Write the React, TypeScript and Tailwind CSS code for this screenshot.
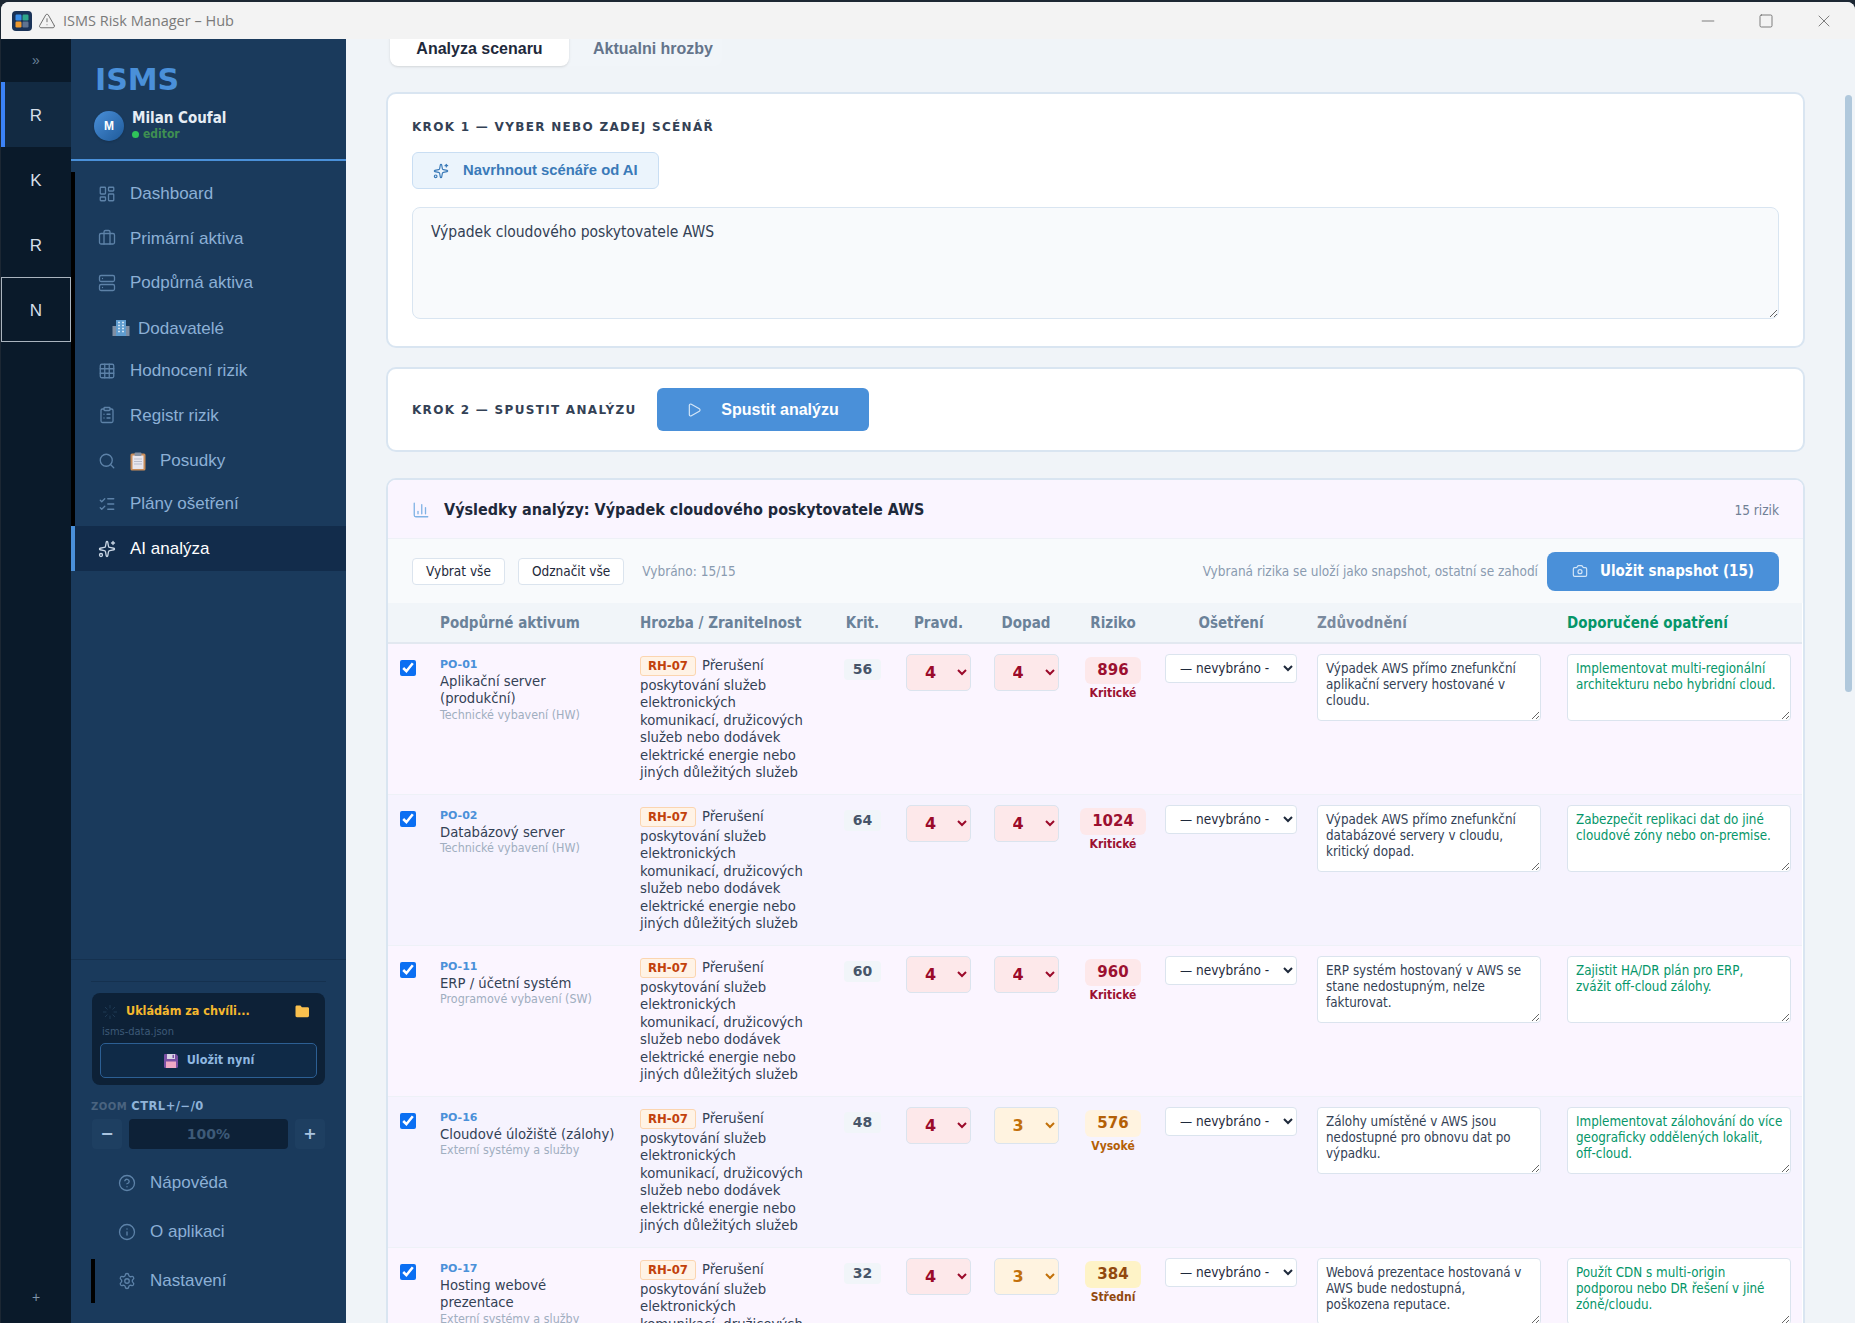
import {
  Briefcase,
  Camera,
  ChartColumn,
  CircleHelp,
  ClipboardList,
  Grid3x3,
  Info,
  LayoutDashboard,
  ListChecks,
  Loader,
  Minus,
  Play,
  Search,
  Server,
  Settings,
  Sparkles,
  Square,
  TriangleAlert,
  X,
} from "lucide-react";

const THREAT =
  "Přerušení poskytování služeb elektronických komunikací, družicových služeb nebo dodávek elektrické energie nebo jiných důležitých služeb";

const LEVELS: Record<number, string> = {
  4: "bg-[#fde8ea] text-[#9b0a2a]",
  3: "bg-[#fff3e0] text-[#c2700a]",
};

const RISKS: Record<string, { box: string; label: string }> = {
  "Kritické": { box: "bg-[#fde8ea] text-[#9b1030]", label: "text-[#9b1030]" },
  "Vysoké": { box: "bg-[#fff3e0] text-[#b45f06]", label: "text-[#b45f06]" },
  "Střední": { box: "bg-[#fef3c7] text-[#92480e]", label: "text-[#92480e]" },
};

const rows = [
  {
    id: "PO-01",
    name: "Aplikační server (produkční)",
    cat: "Technické vybavení (HW)",
    krit: 56,
    p: 4,
    d: 4,
    risk: 896,
    level: "Kritické",
    why: "Výpadek AWS přímo znefunkční aplikační servery hostované v cloudu.",
    fix: "Implementovat multi-regionální architekturu nebo hybridní cloud.",
  },
  {
    id: "PO-02",
    name: "Databázový server",
    cat: "Technické vybavení (HW)",
    krit: 64,
    p: 4,
    d: 4,
    risk: 1024,
    level: "Kritické",
    why: "Výpadek AWS přímo znefunkční databázové servery v cloudu, kritický dopad.",
    fix: "Zabezpečit replikaci dat do jiné cloudové zóny nebo on-premise.",
  },
  {
    id: "PO-11",
    name: "ERP / účetní systém",
    cat: "Programové vybavení (SW)",
    krit: 60,
    p: 4,
    d: 4,
    risk: 960,
    level: "Kritické",
    why: "ERP systém hostovaný v AWS se stane nedostupným, nelze fakturovat.",
    fix: "Zajistit HA/DR plán pro ERP,\nzvážit off-cloud zálohy.",
  },
  {
    id: "PO-16",
    name: "Cloudové úložiště (zálohy)",
    cat: "Externí systémy a služby",
    krit: 48,
    p: 4,
    d: 3,
    risk: 576,
    level: "Vysoké",
    why: "Zálohy umístěné v AWS jsou nedostupné pro obnovu dat po výpadku.",
    fix: "Implementovat zálohování do více geograficky oddělených lokalit,\noff-cloud.",
  },
  {
    id: "PO-17",
    name: "Hosting webové prezentace",
    cat: "Externí systémy a služby",
    krit: 32,
    p: 4,
    d: 3,
    risk: 384,
    level: "Střední",
    why: "Webová prezentace hostovaná v AWS bude nedostupná,\npoškozena reputace.",
    fix: "Použít CDN s multi-origin\npodporou nebo DR řešení v jiné\nzóně/cloudu.",
  },
];

function AppLogo() {
  return (
    <svg width="20" height="20" viewBox="0 0 20 20">
      <rect width="20" height="20" rx="4" fill="#1a3358" />
      <rect x="3.5" y="3.5" width="6" height="6" rx="1.2" fill="#3b8ee8" />
      <rect x="10.5" y="3.5" width="6" height="6" rx="1.2" fill="#2fa68a" />
      <rect x="3.5" y="10.5" width="6" height="6" rx="1.2" fill="#ef9a2e" />
      <rect x="10.5" y="10.5" width="6" height="6" rx="1.2" fill="#5f7390" />
    </svg>
  );
}

function BuildingIcon() {
  return (
    <svg width="18" height="18" viewBox="0 0 18 18">
      <rect x="0.5" y="7" width="5" height="10" fill="#7f8ea3" />
      <rect x="12.5" y="7" width="5" height="10" fill="#7f8ea3" />
      <rect x="4" y="1" width="10" height="16" fill="#5f9ccf" />
      <path d="M6 3.5h2M10 3.5h2M6 6.5h2M10 6.5h2M6 9.5h2M10 9.5h2M6 12.5h2M10 12.5h2" stroke="#cfe3f5" strokeWidth="1.4" />
    </svg>
  );
}

function ClipboardEmoji() {
  return (
    <svg width="16" height="19" viewBox="0 0 16 19">
      <rect x="0.5" y="1.5" width="15" height="17" rx="1.5" fill="#c98d5a" />
      <rect x="2.5" y="3.5" width="11" height="13.5" fill="#e8e6ee" />
      <rect x="4.5" y="0.5" width="7" height="3.5" rx="1" fill="#8792a3" />
      <path d="M4 7h8M4 9.5h8M4 12h8" stroke="#b9bccb" strokeWidth="1" />
    </svg>
  );
}

function FloppyIcon() {
  return (
    <svg width="16" height="16" viewBox="0 0 16 16">
      <path d="M1 2.2C1 1.5 1.5 1 2.2 1H13l2 2v10.800c0 .7-.5 1.200-1.200 1.200H2.200C1.500 15 1 14.500 1 13.800z" fill="#7a4fa3" />
      <rect x="4" y="1" width="8" height="5" fill="#d9d4e4" />
      <rect x="9.500" y="1.800" width="1.500" height="3.200" fill="#7a4fa3" />
      <rect x="3" y="8.500" width="10" height="6.500" fill="#f0a8c4" />
    </svg>
  );
}

function FolderIcon() {
  return (
    <svg width="15" height="13" viewBox="0 0 15 13">
      <path d="M0.500 2C0.500 1.200 1.100.6 1.900.6h3.500l1.500 1.600h5.800c.8 0 1.300.6 1.300 1.300v7.300c0 .8-.6 1.400-1.400 1.400H1.900c-.8 0-1.400-.6-1.400-1.400z" fill="#f9c04e" />
    </svg>
  );
}

function NavItem({
  label,
  Icon,
  active,
  extra,
}: {
  label: string;
  Icon: typeof Search;
  active?: boolean;
  extra?: React.ReactNode;
}) {
  return (
    <div
      className={
        active
          ? "flex h-[45px] items-center gap-[14px] border-l-4 border-[#4a90d9] bg-[#122c4b] pl-[23px] text-white"
          : extra
            ? "flex h-[44.250px] items-center gap-[14px] border-l-4 border-black pl-[23px] pt-[3px] text-[#8cb0d6]"
            : "flex h-[44.250px] items-center gap-[14px] border-l-4 border-black pl-[23px] text-[#8cb0d6]"
      }
    >
      <Icon size={18} strokeWidth={1.75} className={active ? "text-[#c9d6e4]" : "text-[#5d82a8]"} />
      {extra}
      <span className="text-[17px]">{label}</span>
    </div>
  );
}

function RailItem({ label, active, focus }: { label: string; active?: boolean; focus?: boolean }) {
  let cls = "flex h-[65px] items-center justify-center pt-[2px] text-[17px] text-[#d5dfe9]";
  if (active) cls += " border-l-[4px] border-[#3b82f6] bg-[#122a42] pr-1";
  if (focus) cls += " border border-[#aab4be]";
  return <div className={cls}>{label}</div>;
}

function FootLink({ label, Icon, bar }: { label: string; Icon: typeof Search; bar?: boolean }) {
  return (
    <div
      className={
        bar
          ? "ml-5 mt-[3px] flex h-[44px] items-center gap-[14px] border-l-4 border-black pl-[23px] text-[#8cb0d6]"
          : "ml-5 flex h-[49px] items-center gap-[14px] border-l-4 border-transparent pl-[23px] text-[#8cb0d6]"
      }
    >
      <Icon size={18} strokeWidth={1.75} className="text-[#5d82a8]" />
      <span className="text-[17px]">{label}</span>
    </div>
  );
}

function Sidebar() {
  return (
    <aside className="flex w-[275px] shrink-0 flex-col bg-[#1a3a5c] font-['Liberation_Sans',sans-serif]">
      <div className="h-[122px] border-b-2 border-[#4a90d9] pl-[24px] pt-[23px]">
        <div className="font-['DejaVu_Sans',sans-serif] text-[30px] font-bold leading-[36px] text-[#4a90d9]">ISMS</div>
        <div className="-ml-[1px] mt-[12px] flex items-center gap-2">
          <div className="flex h-[30px] w-[30px] items-center justify-center rounded-full bg-gradient-to-br from-[#4a90d9] to-[#1e5a9a] text-[12px] font-bold text-white shadow">
            M
          </div>
          <div className="font-['DejaVu_Sans_Condensed',sans-serif]">
            <div className="text-[15px] font-bold leading-[17px] text-[#e6edf5]">Milan Coufal</div>
            <div className="flex items-center gap-1 text-[12px] font-bold leading-[15px] text-[#3f8f52]">
              <span className="h-[7px] w-[7px] rounded-full bg-[#2fc45a]" />
              editor
            </div>
          </div>
        </div>
      </div>
      <nav className="flex flex-1 flex-col pt-[11px]">
        <NavItem label="Dashboard" Icon={LayoutDashboard} />
        <NavItem label="Primární aktiva" Icon={Briefcase} />
        <NavItem label="Podpůrná aktiva" Icon={Server} />
        <div className="flex h-[44.250px] items-center gap-2 border-l-4 border-black pl-[37px] pt-[3px] text-[#8cb0d6]">
          <BuildingIcon />
          <span className="text-[17px]">Dodavatelé</span>
        </div>
        <NavItem label="Hodnocení rizik" Icon={Grid3x3} />
        <NavItem label="Registr rizik" Icon={ClipboardList} />
        <NavItem label="Posudky" Icon={Search} extra={<ClipboardEmoji />} />
        <NavItem label="Plány ošetření" Icon={ListChecks} />
        <NavItem label="AI analýza" Icon={Sparkles} active />
      </nav>
      <div className="border-t border-[#15314f] px-5 pt-[21px]">
        <div className="border-t border-[#15314f] pt-[11px]">
          <div className="mx-px rounded-lg bg-[#0d2137] px-2 pb-[7px] pt-[9px]">
            <div className="flex items-center font-['DejaVu_Sans_Condensed',sans-serif]">
              <Loader size={16} strokeWidth={1.5} className="ml-[2px] text-[#1f3a55]" />
              <span className="ml-2 flex-1 text-[12.500px] font-bold text-[#f5b82e]">Ukládám za chvíli...</span>
              <span className="mr-[7px]">
                <FolderIcon />
              </span>
            </div>
            <div className="ml-[2px] mt-[4px] font-['DejaVu_Sans_Condensed',sans-serif] text-[11px] leading-[14px] text-[#3d5a78]">
              isms-data.json
            </div>
            <div className="mt-[4px] flex h-[35px] items-center justify-center gap-2 rounded-[5px] border border-[#2c5f94] bg-[#0f2a47] font-['DejaVu_Sans_Condensed',sans-serif] text-[12.500px] font-bold text-[#8fb8e0]">
              <FloppyIcon />
              Uložit nyní
            </div>
          </div>
        </div>
        <div className="mt-[15px] font-['DejaVu_Sans',sans-serif] text-[10px] font-bold leading-[13px] tracking-[0.5px] text-[#4a6480]">
          ZOOM <span className="text-[11.500px] text-[#8fb3d9]">CTRL+/−/0</span>
        </div>
        <div className="mx-px mt-[6px] flex h-[30px] gap-[7px] font-['DejaVu_Sans',sans-serif] font-bold">
          <div className="flex w-[30px] items-center justify-center rounded bg-[#1e3f61] text-[#a9c4e0]">−</div>
          <div className="flex flex-1 items-center justify-center rounded bg-[#0d2137] text-[14px] text-[#3d5a78]">100%</div>
          <div className="flex w-[30px] items-center justify-center rounded bg-[#1e3f61] text-[#a9c4e0]">+</div>
        </div>
      </div>
      <div className="mb-[20px] mt-[9px]">
        <FootLink label="Nápověda" Icon={CircleHelp} />
        <FootLink label="O aplikaci" Icon={Info} />
        <FootLink label="Nastavení" Icon={Settings} bar />
      </div>
    </aside>
  );
}

function ThreatBadge() {
  return (
    <span className="mr-[6px] inline-block rounded-[3px] border border-[#fbd5b0] bg-[#fff3e6] px-[7px] font-['DejaVu_Sans_Condensed',sans-serif] text-[13px] font-bold leading-[18px] text-[#c2410c]">
      RH-07
    </span>
  );
}

function ScoreSelect({ value }: { value: number }) {
  return (
    <select
      defaultValue={value}
      className={`h-[37px] w-[65px] rounded-[5px] border border-[#dbe4ee] pl-[14px] font-['DejaVu_Sans',sans-serif] text-[16px] font-bold ${LEVELS[value]}`}
    >
      <option value={4}>4</option>
      <option value={3}>3</option>
    </select>
  );
}

function Row({ row, odd }: { row: (typeof rows)[number]; odd: boolean }) {
  const risk = RISKS[row.level];
  return (
    <tr className={odd ? "border-b border-[#eef1f7] bg-[#fbf5ff]" : "border-b border-[#eef1f7] bg-[#f6f3fe]"}>
      <td className="pl-3 pt-[16px] align-top">
        <input type="checkbox" defaultChecked className="block h-4 w-4 accent-[#0b6ff2]" />
      </td>
      <td className="px-3 pt-[13px] align-top">
        <div className="font-['DejaVu_Sans',sans-serif] text-[11px] font-bold leading-[15px] text-[#4a90d9]">{row.id}</div>
        <div className="text-[14.700px] leading-[17.500px] text-[#334155]">{row.name}</div>
        <div className="text-[12.400px] leading-[16px] text-[#a0aec0]">{row.cat}</div>
      </td>
      <td className="pb-[13px] pl-3 pr-[28px] pt-[12px] align-top text-[14.700px] leading-[17.500px] text-[#334155]">
        <ThreatBadge />
        {THREAT}
      </td>
      <td className="pt-[13px] text-center align-top">
        <span className="inline-block h-[21px] w-[37px] rounded bg-[#f1f5f9] font-['DejaVu_Sans',sans-serif] text-[14px] font-bold leading-[21px] text-[#475569]">
          {row.krit}
        </span>
      </td>
      <td className="pt-[10px] text-center align-top">
        <ScoreSelect value={row.p} />
      </td>
      <td className="pt-[10px] text-center align-top">
        <ScoreSelect value={row.d} />
      </td>
      <td className="pt-[13px] text-center align-top">
        <span className={`inline-block h-[27px] rounded-md px-3 font-['DejaVu_Sans',sans-serif] text-[15px] font-bold leading-[27px] ${risk.box}`}>
          {row.risk}
        </span>
        <div className={`mt-[2px] font-['DejaVu_Sans_Condensed',sans-serif] text-[12px] font-bold leading-[14px] ${risk.label}`}>
          {row.level}
        </div>
      </td>
      <td className="pt-[10px] text-center align-top">
        <select className="h-[29px] w-[132px] rounded-[4px] border border-[#dbe4ee] bg-white pl-[10px] pr-0 text-[13.500px] text-[#1e293b]">
          <option>— nevybráno -</option>
        </select>
      </td>
      <td className="px-3 pt-[10px] align-top">
        <textarea
          readOnly
          defaultValue={row.why}
          className="block h-[67px] w-[224px] rounded-[4px] border border-[#dbe4ee] bg-white py-[6px] pl-2 pr-[2px] text-[13.300px] leading-[16.300px] text-[#334155]"
        />
      </td>
      <td className="px-3 pt-[10px] align-top">
        <textarea
          readOnly
          defaultValue={row.fix}
          className="block h-[67px] w-[224px] rounded-[4px] border border-[#dbe4ee] bg-white py-[6px] pl-2 pr-[2px] text-[13.300px] leading-[16.300px] text-[#059669]"
        />
      </td>
    </tr>
  );
}

const HEAD_CENTER = "pb-[7px] pt-[9px] text-center";

function Results() {
  return (
    <section className="overflow-hidden rounded-t-[10px] border-2 border-[#d9e5f1] bg-white">
      <div className="flex h-[59px] items-center justify-between border-b border-[#eef1f7] bg-[#faf5ff] pl-6 pr-6 pt-[2px]">
        <div className="flex items-center gap-[14px] font-['DejaVu_Sans_Condensed',sans-serif] text-[16px] font-bold text-[#1e293b]">
          <ChartColumn size={18} strokeWidth={1.75} className="text-[#7fb2e5]" />
          Výsledky analýzy: Výpadek cloudového poskytovatele AWS
        </div>
        <span className="text-[13.500px] text-[#718096]">15 rizik</span>
      </div>
      <div className="flex h-[64px] items-center justify-between bg-[#f8fafc] px-6">
        <div className="flex items-center gap-[13px]">
          <button className="h-[27px] rounded-[4px] border border-[#dbe4ee] bg-white px-[13px] text-[13.500px] text-[#1e293b]">Vybrat vše</button>
          <button className="h-[27px] rounded-[4px] border border-[#dbe4ee] bg-white px-[13px] text-[13.500px] text-[#1e293b]">Odznačit vše</button>
          <span className="ml-[5px] text-[13.500px] text-[#8a9bb0]">Vybráno: 15/15</span>
        </div>
        <div className="flex items-center gap-[9px]">
          <span className="text-[13.500px] text-[#8a9bb0]">Vybraná rizika se uloží jako snapshot, ostatní se zahodí</span>
          <button className="flex h-[39px] w-[232px] items-center justify-center gap-3 rounded-lg bg-[#4a90d9] text-[15px] font-bold text-white">
            <Camera size={16} strokeWidth={1.75} className="text-[#d4e6f8]" />
            Uložit snapshot (15)
          </button>
        </div>
      </div>
      <table className="w-[1414px] table-fixed border-collapse">
        <colgroup>
          <col className="w-[40px]" />
          <col className="w-[200px]" />
          <col className="w-[203px]" />
          <col className="w-[63px]" />
          <col className="w-[89px]" />
          <col className="w-[86px]" />
          <col className="w-[88px]" />
          <col className="w-[148px]" />
          <col className="w-[250px]" />
          <col className="w-[247px]" />
        </colgroup>
        <thead>
          <tr className="border-b-2 border-[#e2e8f0] bg-[#f1f5f9] text-[15px] font-bold text-[#6b8299]">
            <th />
            <th className="px-3 pb-[7px] pt-[9px] text-left">Podpůrné aktivum</th>
            <th className="px-3 pb-[7px] pt-[9px] text-left">Hrozba / Zranitelnost</th>
            <th className={HEAD_CENTER}>Krit.</th>
            <th className={HEAD_CENTER}>Pravd.</th>
            <th className={HEAD_CENTER}>Dopad</th>
            <th className={HEAD_CENTER}>Riziko</th>
            <th className={HEAD_CENTER}>Ošetření</th>
            <th className="px-3 pb-[7px] pt-[9px] text-left text-[#7a8a9e]">Zdůvodnění</th>
            <th className="px-3 pb-[7px] pt-[9px] text-left text-[#059669]">Doporučené opatření</th>
          </tr>
        </thead>
        <tbody>
          {rows.map((row, i) => (
            <Row key={row.id} row={row} odd={i % 2 === 0} />
          ))}
        </tbody>
      </table>
    </section>
  );
}

export default function App() {
  return (
    <div className="h-[1323px] w-[1855px] overflow-hidden bg-[#1c2733] pl-px pt-[2px]">
      <div className="flex h-full flex-col overflow-hidden rounded-t-lg bg-[#f0f4f8] font-['DejaVu_Sans_Condensed',sans-serif]">
        {/* Title bar */}
        <header className="flex h-[37px] shrink-0 items-center bg-[#f3f3f3] pl-[11px] font-['Open_Sans',sans-serif] text-[14.500px] text-[#7a7a7a]">
          <AppLogo />
          <TriangleAlert size={18} strokeWidth={1.25} className="ml-[6px] text-[#666]" />
          <span className="ml-[7px]">ISMS Risk Manager – Hub</span>
          <div className="ml-auto flex items-center gap-[40px] pr-[21px] text-[#666]">
            <Minus size={20} strokeWidth={1} />
            <Square size={16} strokeWidth={1.25} />
            <X size={20} strokeWidth={1} />
          </div>
        </header>

        <div className="flex min-h-0 flex-1">
          {/* App rail */}
          <div className="flex w-[70px] shrink-0 flex-col bg-[#0a1a2a] font-['Liberation_Sans',sans-serif]">
            <div className="flex h-[43px] items-center justify-center text-[14px] text-[#6b8299]">»</div>
            <RailItem label="R" active />
            <RailItem label="K" />
            <RailItem label="R" />
            <RailItem label="N" focus />
            <div className="mb-[15px] mt-auto text-center text-[14px] text-[#7f95ab]">+</div>
          </div>

          <Sidebar />

          <main className="relative min-w-0 flex-1 overflow-hidden">
            <div className="-mt-[9px] pl-[40px] pr-[50px]">
              <div className="ml-[4px] flex w-[332px] rounded-lg bg-[#f1f5f9]">
                <div className="flex h-[36px] w-[179px] items-center justify-center rounded-lg bg-white pt-[2px] font-['Liberation_Sans',sans-serif] text-[16px] font-bold text-[#1e293b] shadow-sm">
                  Analyza scenaru
                </div>
                <div className="flex h-[36px] items-center pl-6 pt-[2px] font-['Liberation_Sans',sans-serif] text-[16px] font-bold text-[#64748b]">
                  Aktualni hrozby
                </div>
              </div>

              <section className="mt-[26px] h-[256px] rounded-[10px] border-2 border-[#d9e5f1] bg-white px-6 pt-6">
                <h3 className="font-['DejaVu_Sans',sans-serif] text-[12px] font-bold leading-[18px] tracking-[1.3px] text-[#334155]">
                  KROK 1 — VYBER NEBO ZADEJ SCÉNÁŘ
                </h3>
                <button className="mt-[16px] flex h-[37px] items-center gap-[14px] rounded-md border border-[#c9def3] bg-[#ebf4fc] px-[20px] font-['Liberation_Sans',sans-serif] text-[14.800px] font-bold text-[#3a7ab8]">
                  <Sparkles size={16} strokeWidth={1.75} />
                  Navrhnout scénáře od AI
                </button>
                <textarea
                  readOnly
                  defaultValue="Výpadek cloudového poskytovatele AWS"
                  className="mt-[18px] block h-[112px] w-full rounded-lg border border-[#d9e5f1] bg-[#f8fafc] px-[18px] py-[13px] text-[15.500px] text-[#334155]"
                />
              </section>

              <section className="mt-[19px] flex h-[85px] items-center gap-5 rounded-[10px] border-2 border-[#d9e5f1] bg-white px-6">
                <h3 className="font-['DejaVu_Sans',sans-serif] text-[12px] font-bold tracking-[1.3px] text-[#334155]">
                  KROK 2 — SPUSTIT ANALÝZU
                </h3>
                <button className="flex h-[43px] w-[212px] items-center justify-center gap-[19px] rounded-md bg-[#4a90d9] font-['Liberation_Sans',sans-serif] text-[16px] font-bold text-white">
                  <Play size={16} strokeWidth={1.75} className="text-[#d4e6f8]" />
                  Spustit analýzu
                </button>
              </section>

              <div className="mt-[26px]">
                <Results />
              </div>
            </div>
            {/* scrollbar thumb */}
            <div className="absolute right-[3px] top-[56px] h-[597px] w-[7px] rounded-full bg-[#b0c8dc]" />
          </main>
        </div>
      </div>
    </div>
  );
}
